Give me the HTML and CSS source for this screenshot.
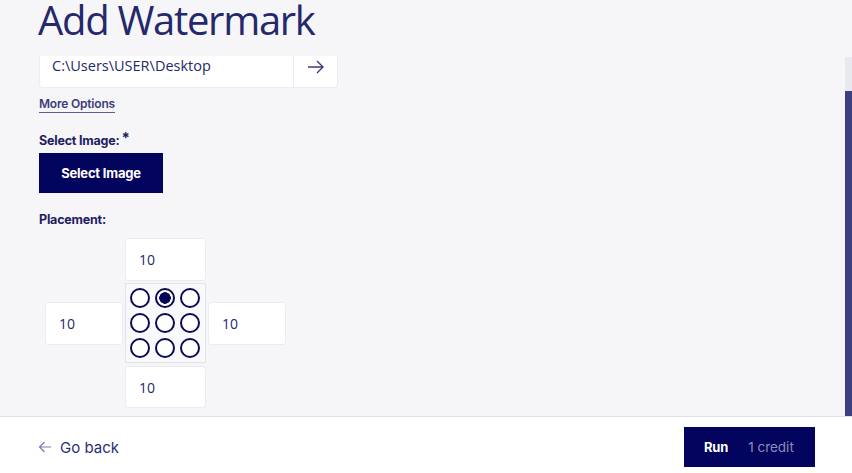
FILE: index.html
```html
<!DOCTYPE html>
<html>
<head>
<meta charset="utf-8">
<link rel="stylesheet" href="styles.css">
</head>
<body>
<div class="page">
  <main class="main">
    <h1 class="title">Add Watermark</h1>
    <div class="path-box">
      <span class="path-text">C:\Users\USER\Desktop</span>
      <span class="path-go">
        <svg width="20" height="16" viewBox="0 0 20 16"><path d="M2 8H17M11 2L17 8L11 14" fill="none" stroke="#3b3d7d" stroke-width="1.4"/></svg>
      </span>
    </div>
    <a class="more">More Options</a>
    <div class="label">Select Image:<span class="star">*</span></div>
    <button class="btn-select">Select Image</button>
    <div class="label label-place">Placement:</div>
    <div class="place-grid">
      <div class="num top">10</div>
      <div class="num left">10</div>
      <div class="radios">
        <span class="r"></span><span class="r on"></span><span class="r"></span>
        <span class="r"></span><span class="r"></span><span class="r"></span>
        <span class="r"></span><span class="r"></span><span class="r"></span>
      </div>
      <div class="num right">10</div>
      <div class="num bottom">10</div>
    </div>
    <div class="scroll-track"><div class="scroll-thumb"></div></div>
  </main>
  <footer class="footer">
    <a class="back">
      <svg width="14" height="12" viewBox="0 0 14 12"><path d="M13 6H1.5M6.5 1L1.5 6L6.5 11" fill="none" stroke="#7a7cb0" stroke-width="1.2"/></svg>
      <span>Go back</span>
    </a>
    <button class="btn-run"><span class="run">Run</span><span class="credit">1 credit</span></button>
  </footer>
</div>
</body>
</html>
```
FILE: styles.css
```css
html, body {
  margin: 0;
  padding: 0;
}
body {
  width: 852px;
  height: 473px;
  overflow: hidden;
  font-family: "Inter", "Liberation Sans", sans-serif;
}
.page {
  display: flex;
  flex-direction: column;
  height: 473px;
}
.main {
  position: relative;
  height: 417px;
  background: #f6f6f9;
  padding-left: 39px;
  overflow: hidden;
  box-sizing: border-box;
  border-bottom: 1px solid #e2e2e9;
  flex: none;
}
.title {
  margin: 0 0 0 -1px;
  font-family: "Open Sans", sans-serif;
  font-weight: 400;
  font-size: 40px;
  line-height: 40px;
  color: #25286b;
  letter-spacing: -1.3px;
}
.path-box {
  margin-top: 16px;
  width: 299px;
  height: 32px;
  background: #fff;
  border: 1px solid #ececf2;
  border-top: none;
  border-radius: 0 0 4px 4px;
  box-sizing: border-box;
  display: flex;
  align-items: center;
}
.path-text {
  flex: 1;
  padding-left: 12px;
  font-family: "Open Sans", sans-serif;
  font-size: 14.5px;
  color: #25286b;
  margin-top: -13px;
}
.path-go {
  width: 43px;
  height: 100%;
  border-left: 1px solid #ececf2;
  display: flex;
  align-items: center;
  justify-content: center;
}
.path-go svg { margin-top: -9px; }
.more {
  display: inline-block;
  margin-top: 8px;
  font-size: 12px;
  font-weight: 600;
  color: #3b3d7a;
  border-bottom: 1px solid #5c5e92;
  line-height: 16px;
  letter-spacing: -0.2px;
}
.label {
  margin-top: 17px;
  font-size: 12.5px;
  font-weight: 700;
  color: #1e2060;
  line-height: 16px;
  letter-spacing: -0.2px;
}
.star {
  font-size: 15px;
  vertical-align: 2px;
  margin-left: 2px;
}
.btn-select {
  display: block;
  margin-top: 4px;
  width: 124px;
  height: 40px;
  border: none;
  background: #03045e;
  color: #fff;
  font-family: "Inter", sans-serif;
  font-size: 13px;
  font-weight: 700;
  letter-spacing: -0.2px;
  padding: 0;
}
.label-place {
  margin-top: 19px;
}
.place-grid {
  margin-top: 10px;
  margin-left: 6px;
  display: grid;
  grid-template-columns: 78px 81px 78px;
  grid-template-rows: 43px 80px 43px;
  column-gap: 2px;
  row-gap: 2px;
}
.num {
  background: #fff;
  border: 1px solid #ebebf1;
  border-radius: 3px;
  box-sizing: border-box;
  font-family: "Open Sans", sans-serif;
  font-size: 14px;
  color: #25286b;
  display: flex;
  align-items: center;
  padding-left: 13px;
}
.top { grid-column: 2; grid-row: 1; }
.left { grid-column: 1; grid-row: 2; align-self: center; height: 43px; }
.right { grid-column: 3; grid-row: 2; align-self: center; height: 43px; }
.bottom { grid-column: 2; grid-row: 3; margin-top: 1px; }
.radios {
  grid-column: 2;
  grid-row: 2;
  border: 1px solid #e3e3ea;
  background: #f9f9fb;
  box-sizing: border-box;
  display: grid;
  grid-template-columns: repeat(3, 20px);
  grid-template-rows: repeat(3, 20px);
  gap: 5px;
  padding: 4px;
}
.r {
  width: 20px;
  height: 20px;
  border: 2px solid #0b0b55;
  border-radius: 50%;
  box-sizing: border-box;
  background: #fff;
}
.r.on {
  background: radial-gradient(circle, #05055a 0 5.5px, #fff 6px);
}
.scroll-track {
  position: absolute;
  right: 0;
  top: 57px;
  width: 7px;
  bottom: 0;
  background: #e8e8ef;
}
.scroll-thumb {
  position: absolute;
  left: 0;
  right: 0;
  top: 34px;
  bottom: 0;
  background: #3c3f80;
}
.footer {
  flex: 1;
  background: #fff;
  display: flex;
  align-items: center;
  justify-content: space-between;
  padding: 0 37px 0 38px;
}
.back {
  display: flex;
  align-items: center;
  gap: 8px;
  font-size: 15px;
  color: #2b2d78;
  margin-top: 4px;
}
.btn-run {
  width: 131px;
  height: 40px;
  border: none;
  background: #03045e;
  display: flex;
  align-items: center;
  padding: 0 0 0 20px;
  font-family: "Inter", sans-serif;
  font-size: 13px;
  margin-top: 4px;
}
.run {
  color: #fff;
  font-weight: 700;
  letter-spacing: -0.2px;
}
.credit {
  color: #8b8cb8;
  font-size: 13.5px;
  margin-left: 20px;
}
```
